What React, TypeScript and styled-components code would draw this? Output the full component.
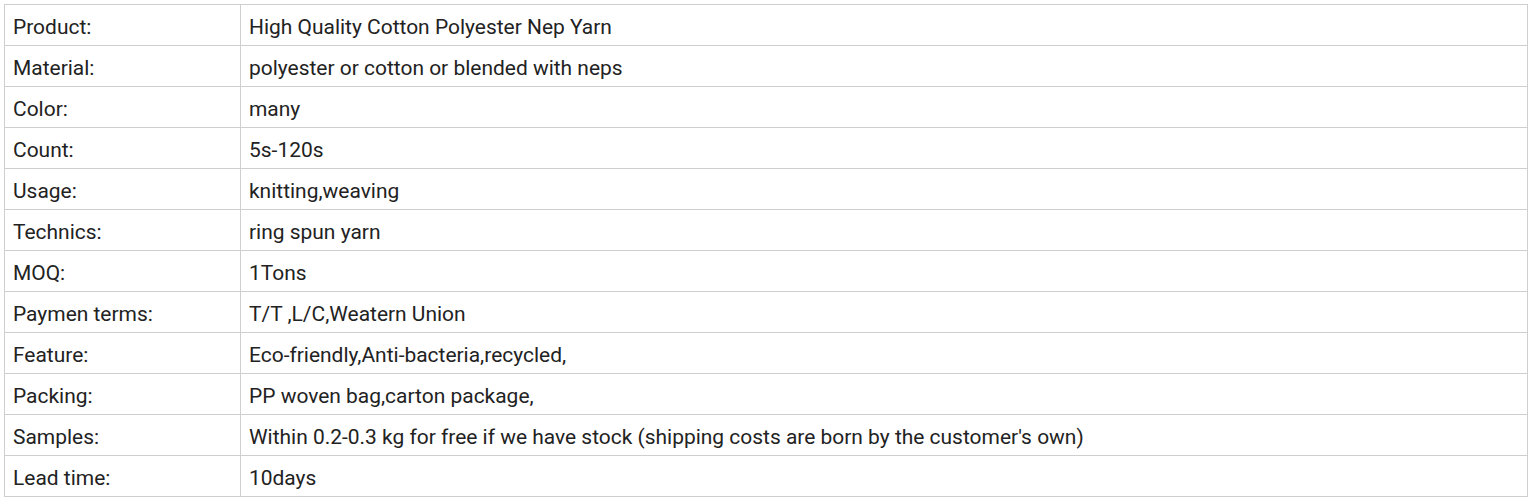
import React from "react";
import styled, { createGlobalStyle } from "styled-components";

const Global = createGlobalStyle`
  html, body { margin: 0; padding: 0; background: #fff; }
  body { font-family: Roboto, "Liberation Sans", sans-serif; }
`;

const Page = styled.div`
  padding: 4px 8px 0 4px;
`;

const Table = styled.table`
  width: 1524px;
  border-collapse: collapse;
  table-layout: fixed;
  color: #222;
  font-size: 20.96px;
`;

const Row = styled.tr`
  height: 41px;
`;

const Cell = styled.td<{ $label?: boolean }>`
  border: 1px solid #cfcfcf;
  padding: 3px 8px 0 8px;
  height: 40px;
  box-sizing: border-box;
  vertical-align: middle;
  white-space: nowrap;
  line-height: 24px;
  width: ${(p) => (p.$label ? "236px" : "auto")};
`;

const rows: [string, string][] = [
  ["Product:", "High Quality Cotton Polyester Nep Yarn"],
  ["Material:", "polyester or cotton or blended with neps"],
  ["Color:", "many"],
  ["Count:", "5s-120s"],
  ["Usage:", "knitting,weaving"],
  ["Technics:", "ring spun yarn"],
  ["MOQ:", "1Tons"],
  ["Paymen terms:", "T/T ,L/C,Weatern Union"],
  ["Feature:", "Eco-friendly,Anti-bacteria,recycled,"],
  ["Packing:", "PP woven bag,carton package,"],
  ["Samples:", "Within 0.2-0.3 kg for free if we have stock (shipping costs are born by the customer's own)"],
  ["Lead time:", "10days"],
];

export default function App() {
  return (
    <Page>
      <Global />
      <Table>
        <tbody>
          {rows.map(([k, v]) => (
            <Row key={k}>
              <Cell $label>{k}</Cell>
              <Cell>{v}</Cell>
            </Row>
          ))}
        </tbody>
      </Table>
    </Page>
  );
}
